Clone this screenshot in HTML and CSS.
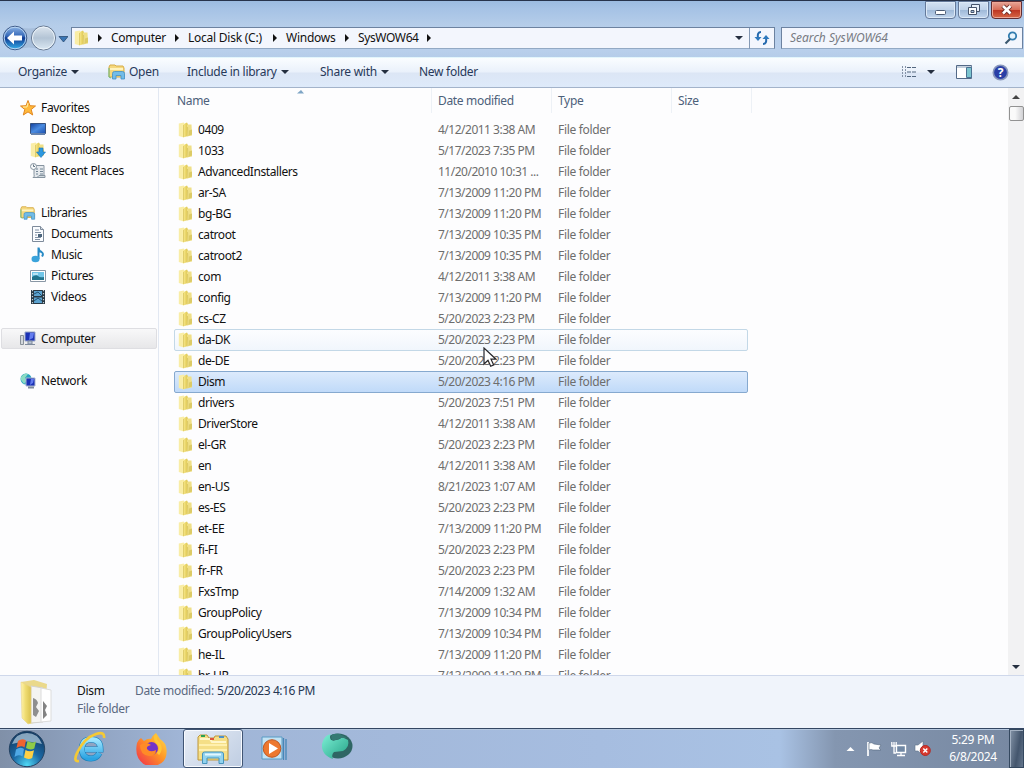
FILE: index.html
```html
<!DOCTYPE html>
<html lang="en">
<head>
<meta charset="utf-8">
<title>SysWOW64</title>
<link rel="stylesheet" href="styles.css">
</head>
<body>
<svg class="defs" width="0" height="0">
  <defs>
    <linearGradient id="gold" x1="0" x2="1"><stop offset="0" stop-color="#fff3ad"/><stop offset=".45" stop-color="#efdc72"/><stop offset="1" stop-color="#d9c24f"/></linearGradient>
    <linearGradient id="blue" x1="0" y1="0" x2="0" y2="1"><stop offset="0" stop-color="#8fb6e6"/><stop offset=".42" stop-color="#3568b8"/><stop offset=".5" stop-color="#103a92"/><stop offset="1" stop-color="#35b4ee"/></linearGradient>
    <linearGradient id="screen" x1="0" y1="0" x2="1" y2="1"><stop offset="0" stop-color="#123f9c"/><stop offset=".5" stop-color="#4a8be0"/><stop offset="1" stop-color="#1b4fb0"/></linearGradient>
    <linearGradient id="glass" x1="0" y1="0" x2="0" y2="1"><stop offset="0" stop-color="#dde6ef"/><stop offset=".5" stop-color="#b3c4d5"/><stop offset="1" stop-color="#dce9f4"/></linearGradient>
    <radialGradient id="orb" cx=".5" cy=".95" r=".9"><stop offset="0" stop-color="#4fd8f5"/><stop offset=".45" stop-color="#1c6aa6"/><stop offset="1" stop-color="#123a62"/></radialGradient>
    <linearGradient id="fox" x1="1" y1="0" x2="0" y2="1"><stop offset="0" stop-color="#ffe34a"/><stop offset=".45" stop-color="#ff9426"/><stop offset="1" stop-color="#f0284f"/></linearGradient>
    <linearGradient id="teal" x1="0" y1="0" x2="1" y2="1"><stop offset="0" stop-color="#7df0d6"/><stop offset="1" stop-color="#25a286"/></linearGradient>
    <linearGradient id="ie" x1="0" y1="0" x2="0" y2="1"><stop offset="0" stop-color="#9fe6ff"/><stop offset="1" stop-color="#2ba3e2"/></linearGradient>
    <symbol id="folder" viewBox="0 0 16 16"><path d="M.8 1.500L6 .5v15l-5.200-1.500z" fill="#f9eda6"/><path d="M4.500 2.500l4.500-2 1 2v11.500l-5 1.500z" fill="url(#gold)"/><path d="M9 2.500h4.500l.5 11-5 1z" fill="#efdf86"/><path d="M5.500 3v12M9.500 5l.5 9" stroke="#cfb850" stroke-width=".6"/><path d="M11 8.500l3-1v5l-3 1z" fill="#dccb66"/></symbol>
    <symbol id="library" viewBox="0 0 18 16"><path d="M1 3l1-2h5l1 1h7l1 2v9H1z" fill="#f5d87d" stroke="#d7ad48"/><path d="M2 5h13" stroke="#fff3bd" stroke-width="2"/><path d="M4.500 15V9.500q0-2 2-2h8q2 0 2 2V15h-3.500v-3.500h-5V15z" fill="#72bce8" stroke="#3f8fc7" stroke-width=".8"/><path d="M1 4v9l2 1" fill="none" stroke="#67bd85"/></symbol>
    <symbol id="monitor" viewBox="0 0 16 16"><path d="M.5 2.500h15v10H.5z" fill="url(#screen)" stroke="#35517f"/><path d="M1 12h14v2H1z" fill="#6682ac"/></symbol>
  </defs>
</svg>
<div class="window">
  <header class="titlebar">
    <div class="caption">
      <span class="cap"><svg width="14" height="12"><rect x="1.500" y="6.500" width="10" height="4" rx="1" fill="#fff" stroke="#4c5b74"/></svg></span>
      <span class="cap"><svg width="14" height="14"><path d="M4.500 1.500h8v7h-8z" fill="#e9f1fa" stroke="#46546b"/><path d="M1.500 4.500h8v7h-8z" fill="#fff" stroke="#46546b"/><path d="M4 7.500h3v2H4z" fill="#a9c0dc" stroke="#46546b"/></svg></span>
      <span class="cap cap-close"><svg width="14" height="12"><path d="M3 2l7.500 7.500M10.500 2L3 9.500" stroke="#6b2a24" stroke-width="4.500"/><path d="M3 2l7.500 7.500M10.500 2L3 9.500" stroke="#fff" stroke-width="2.600"/></svg></span>
    </div>
  </header>
  <nav class="addressbar">
    <svg class="travel" width="68" height="28"><path d="M16 2q12 5 27 0v24q-15-5-27 0z" fill="#9db4d0" opacity=".6"/><circle cx="15" cy="14" r="11.800" fill="url(#blue)" stroke="#405b87"/><circle cx="15" cy="14" r="10.800" fill="none" stroke="#b7d4f2"/><path d="M7 14l7-6.500v4h8v5h-8v4z" fill="#fff"/><circle cx="43.500" cy="14" r="12" fill="url(#glass)" stroke="#63758e"/><circle cx="43.500" cy="14" r="11" fill="none" stroke="#edf5fb"/><path d="M59 12.500h9l-4.500 5.500z" fill="#3a76b5" stroke="#294b72" stroke-width=".8"/></svg>
    <div class="path">
      <svg class="pathicon" width="16" height="16"><use href="#folder"/></svg>
      <i class="chev"></i><span class="crumb c1">Computer</span><i class="chev"></i><span class="crumb c2">Local Disk (C:)</span><i class="chev"></i><span class="crumb c3">Windows</span><i class="chev"></i><span class="crumb c4">SysWOW64</span><i class="chev"></i>
      <i class="down pathdown"></i>
      <span class="refresh"><svg width="16" height="14"><path d="M7 1Q3 1 4 7M9 13q4 0 3-6" fill="none" stroke="#2469ad" stroke-width="2"/><path d="M.5 6h7L4 10zM8.500 8h7L12 4z" fill="#2e79bd"/></svg></span>
    </div>
    <div class="search"><span>Search SysWOW64</span><svg width="14" height="14"><circle cx="8.500" cy="5" r="3.700" fill="#e7f4fd" stroke="#327caf" stroke-width="1.800"/><path d="M6 8l-4.500 4.500" stroke="#3b586f" stroke-width="2.200"/></svg></div>
  </nav>
  <div class="toolbar">
    <span class="tool t-org">Organize<i class="down"></i></span>
    <span class="tool t-open"><svg width="18" height="16"><use href="#library"/></svg>Open</span>
    <span class="tool t-inc">Include in library<i class="down"></i></span>
    <span class="tool t-share">Share with<i class="down"></i></span>
    <span class="tool t-new">New folder</span>
    <div class="views">
      <svg width="17" height="14"><path d="M1.500 1v12M4.500 1v12" stroke="#8492a6" stroke-dasharray="2 1"/><path d="M6 2.500h4M11 2.500h4M6 7h4M11 7h4M6 11.500h4M11 11.500h4" stroke="#53677f"/></svg>
      <i class="down"></i>
      <svg class="preview" width="17" height="14"><path d="M.5.500h15v13H.5z" fill="#fff" stroke="#536987"/><path d="M1 2h15" stroke="#8aa2bc"/><path d="M10.500 2.500h5v10h-5z" fill="#7cc5cf" stroke="#4b7292"/></svg>
      <svg class="help" width="17" height="17"><circle cx="8.500" cy="8.500" r="7.200" fill="#293fa6" stroke="#8796bb" stroke-width="1.600"/><text x="8.500" y="13" text-anchor="middle" fill="#fff">?</text></svg>
    </div>
  </div>
  <main class="content">
    <aside class="side">
      <div class="item top"><svg width="16" height="16" viewBox="0 0 16 16"><path d="M8 .5l2 5.200 5.500.3-4.300 3.500L12.700 15 8 11.900 3.300 15l1.500-5.500L.5 6 6 5.700z" fill="#ffb93b" stroke="#e18722"/><path d="M8 3L7 7l-4 0" fill="none" stroke="#fff0a5"/></svg>Favorites</div>
      <div class="item"><svg width="16" height="16"><use href="#monitor"/></svg>Desktop</div>
      <div class="item"><svg width="16" height="16"><use href="#folder"/><path d="M9 6h4v4h2.500L11 15.500 6.500 10H9z" fill="#2d98df" stroke="#1874b8" stroke-width=".6"/></svg>Downloads</div>
      <div class="item"><svg width="16" height="16"><path d="M4 2.500h10V12q0 2.500-2 2.500H3q2-1 1-3z" fill="#e5e9ed" stroke="#8794a0"/><path d="M6 6h2M10 6h3M6 8.500h2M10 8.500h3M6 11h2M10 11h3" stroke="#718494"/><circle cx="3.500" cy="3.500" r="3" fill="#f8fafb" stroke="#8794a0"/><path d="M3.500 1.500v2H5" fill="none" stroke="#637482"/><path d="M7 14.500h8v-2H9z" fill="#d2dbe1" stroke="#8794a0"/></svg>Recent Places</div>
      <div class="item top gap"><svg width="16" height="16"><use href="#library"/></svg>Libraries</div>
      <div class="item"><svg width="16" height="16"><path d="M2.500.500h8l3 3v12h-11z" fill="#fafcff" stroke="#7e8b9b"/><path d="M10.500.500v3h3" fill="#d3dbe4" stroke="#7e8b9b"/><path d="M5 4h4M5 6.500h6M5 9h2M5 11.500h6M5 13.500h5" stroke="#8292a5"/><path d="M8 8h4v3H8z" fill="#4c657d"/></svg>Documents</div>
      <div class="item"><svg width="16" height="16"><path d="M8.500 12V.500q0 3 3 4.500 2.500 1.500.5 4.500" fill="none" stroke="#278ac5" stroke-width="2"/><ellipse cx="5.500" cy="12" rx="4" ry="3.200" fill="#3aa3db"/></svg>Music</div>
      <div class="item"><svg width="16" height="16"><path d="M.5 2.500h15v11H.5z" fill="#fff" stroke="#8997a5"/><path d="M2 4h12v8H2z" fill="#72c6e8"/><path d="M2 9q4-3 6-1t6 1v3H2z" fill="#22758e"/><path d="M3 6h5" stroke="#fff"/></svg>Pictures</div>
      <div class="item"><svg width="16" height="16"><path d="M1 1h14v14H1z" fill="#283844"/><path d="M2.500 1v14M13.500 1v14" stroke="#c3ced4" stroke-width="1.200" stroke-dasharray="1.200 1.800"/><path d="M4 2h8v5H4zM4 8.500h8V14H4z" fill="#5ba2cf"/><path d="M4 5l4-2 4 4M4 12l4-3 4 3" fill="none" stroke="#24506e"/></svg>Videos</div>
      <div class="item top gap current"><svg width="16" height="16"><path d="M.5 4.500h3v9h-3z" fill="#d2d7dc" stroke="#899199"/><path d="M5 1h10v9H5z" fill="#1b31b5" stroke="#9aa8c8"/><path d="M10 2h4l-1 5-4 2z" fill="#637cef"/><path d="M8 10h4v3H8zM5 13.500h10" fill="#bbc5d5" stroke="#7e8b9d"/></svg>Computer</div>
      <div class="item top gap"><svg width="16" height="16"><circle cx="6" cy="6" r="5.500" fill="#28a2bf"/><path d="M1 4q4-5 7-3L5 5l2 2-3 4-3-4z" fill="#8bdcc3"/><path d="M6 5h9v8H6z" fill="#1b31b5" stroke="#a8b5ce"/><path d="M11 6h3l-1 4-3 2z" fill="#637cef"/><path d="M8 14.500h6" stroke="#7e8b9d" stroke-width="2"/></svg>Network</div>
    </aside>
    <section class="list">
      <div class="head"><span class="h-name">Name<svg class="sort" width="8" height="5"><path d="M0 4.500L4 1l3 3.500z" fill="#7ea5c5"/></svg></span><span>Date modified</span><span>Type</span><span class="h-size">Size</span></div>
      <div class="rows" id="rows"></div>
      <svg class="cursor" width="14" height="22"><path d="M1 1v16l4-3.800 2.700 6 3-1.300-2.700-5.700h5z" fill="#fff" stroke="#26262b" stroke-width="1.200"/></svg>
    </section>
    <div class="scroll"><i class="up"></i><b></b><i class="down"></i></div>
  </main>
  <footer class="details">
    <svg width="38" height="46"><path d="M1 3l13-2 13 4-3 37-15 3z" fill="#ead98c"/><path d="M11 7l12 2v34l-12 1z" fill="#f4f4f2" stroke="#d3d3cf"/><path d="M21 9l10 2v31l-10 1z" fill="#fff" stroke="#dcdcdc"/><path d="M13 19q4 1 5 5l-2 4 3 4-3 6-3-2z" fill="#8f8f8f"/><path d="M23 22l4 5-2 4 2 5-4 4z" fill="#838383"/><path d="M1 3l10 5v36l-3 1-6-6z" fill="url(#gold)" stroke="#e9d588" stroke-width=".6"/></svg>
    <div class="info"><div class="line1"><span class="name">Dism</span><span class="label">Date modified:</span><span class="value">5/20/2023 4:16 PM</span></div><div class="kind">File folder</div></div>
  </footer>
</div>
<div class="taskbar">
  <svg class="start" width="38" height="38"><circle cx="19" cy="19" r="17.700" fill="url(#orb)" stroke="#244363"/><path d="M4 14Q8 3 19 3t15 11q-15-5-30 0z" fill="#c5dceb" opacity=".65"/><path d="M10 11q4-3 8-.5l-1.500 7Q13 15 8.500 18z" fill="#ef6430"/><path d="M19.500 11q4 2.500 8.500.5l-1.700 7q-4 2-8.300-.5z" fill="#8fcb47"/><path d="M8 19.500q4-3 8-.5l-1.500 7.500q-4-2.500-8 .5z" fill="#4fa8e5"/><path d="M17.500 20q4 2.500 8.500.3L24.200 28q-4 2-8.200-.5z" fill="#ffd044"/></svg>
  <svg class="ie" width="32" height="34"><path d="M25.500 22Q22.500 27.500 17 27.500q-9 0-9-9.500t9-9.500q9.500 0 9.500 10H11" fill="none" stroke="#187fb9" stroke-width="6"/><path d="M25.500 22Q22.500 27.500 17 27.500q-9 0-9-9.500t9-9.500q9.500 0 9.500 10H11" fill="none" stroke="url(#ie)" stroke-width="4.800"/><path d="M5 30Q-1 31 3 22 10 7 22 3q9-3 8 4" fill="none" stroke="#f5c934" stroke-width="2.700"/></svg>
  <svg class="ff" width="32" height="32"><path d="M2 10q1-3 4-5l3 3q4-3 7-2 2-4 5-6l4 6q6 4 6.500 10 1 10-5 14-9 6-18 1Q-1 24 2 10z" fill="url(#fox)"/><circle cx="16.500" cy="15.500" r="6.500" fill="#7333c7"/><path d="M5 12q6-4 11 0-5 1-4 4 3 4 9 1 0 6-7 6-9-1-9-11z" fill="#ff8b27"/><path d="M21 2q-2 5 3 9 3 5-1 10" fill="none" stroke="#ffc536" stroke-width="3"/></svg>
  <div class="active"><svg width="34" height="32"><path d="M2 27V4l2-2h7l2 3h5l1-2h11l2 3v21z" fill="#f5df87" stroke="#bd963a"/><path d="M4 6h10l2 3h14" fill="none" stroke="#fff6c9" stroke-width="2"/><path d="M5 3h4" stroke="#2ba354" stroke-width="2"/><path d="M14 6h4" stroke="#de563b" stroke-width="2"/><path d="M23 4h5" stroke="#4d91c9" stroke-width="2"/><path d="M3 12h28M3 17h28" stroke="#fff0ae" stroke-width="2"/><path d="M6.500 30.500V21q0-2 2-2h17q2 0 2 2v9.500h-4.500V25h-12v5.500z" fill="#92d3ee" stroke="#4694bd"/><path d="M9 21.500h16" stroke="#e3f7ff" stroke-width="2"/></svg></div>
  <svg class="wmp" width="27" height="26"><path d="M1 1h20v22H1z" fill="#c2e3f4" stroke="#599bc4"/><path d="M22.500 2v22M25 3v21" stroke="#4687b8" stroke-width="1.300"/><circle cx="11" cy="12.500" r="8.800" fill="#ed782e" stroke="#bd5723"/><path d="M8 7l9 5.500L8 18z" fill="#fff"/></svg>
  <svg class="globe" width="34" height="30"><ellipse cx="18" cy="14" rx="14.500" ry="12.500" fill="#2f6664"/><path d="M2 12Q4 3 11 2q-2 3 0 6 8 1 11-3l6 3q2 7-5 11l-9 1q-3 3-1 7Q1 23 2 12z" fill="url(#teal)"/><path d="M12 2.500q3-1 8-.5l7 4-6 0-8 3q-3-3-1-6.500z" fill="#347a73"/></svg>
  <div class="tray">
    <svg class="t-up" width="9" height="6"><path d="M.5 5L4.500 1l4 4z" fill="#fff"/></svg>
    <svg class="flag" width="16" height="16"><path d="M2 1v14" stroke="#fff" stroke-width="1.700"/><path d="M3 2q3-1 5 1l7 1-2 3 2 2-8 0q-2-1-4 0z" fill="#fff" stroke="#53667e" stroke-width=".6"/></svg>
    <svg class="net" width="16" height="16"><path d="M5.500 4.500h9v7h-9z" fill="#7188a4" stroke="#fff" stroke-width="1.400"/><path d="M10 12v2M6 14.500h8M3 5v7h2M.800 1v4h4.400V1M3 1v4" fill="none" stroke="#fff" stroke-width="1.300"/></svg>
    <svg class="vol" width="17" height="17"><path d="M1 5h3l5-4v14l-5-4H1z" fill="#fff" stroke="#60738b" stroke-width=".6"/><circle cx="11.300" cy="10.500" r="5" fill="#d8392f" stroke="#b32924"/><path d="M9.300 8.500l4 4M13.300 8.500l-4 4" stroke="#fff" stroke-width="1.500"/></svg>
    <div class="clock"><span>5:29 PM</span><span>6/8/2024</span></div>
    <div class="show"></div>
  </div>
</div>
<script src="files.js"></script>
</body>
</html>
```
FILE: styles.css
```css
* { box-sizing: border-box; }
body { margin: 0; width: 1024px; height: 768px; overflow: hidden; display: flex; flex-direction: column; font: 12px/21px "Noto Sans", "Open Sans", sans-serif; letter-spacing: -.32px; color: #111; background: #fff; white-space: nowrap; }
svg { display: block; flex: none; }
.defs { position: absolute; }
.window { height: 728px; display: flex; flex-direction: column; }
.titlebar { height: 25px; border-top: 1px solid #26334b; background: linear-gradient(#9bbbe0, #a5c2e5 30%, #b5cde9); display: flex; justify-content: flex-end; padding-right: 2px; }
.caption { display: flex; gap: 2px; height: 18px; }
.cap { width: 31px; height: 18px; border: 1px solid #64799a; border-radius: 0 0 4px 4px; background: linear-gradient(#d3e2f3, #bed1e8 50%, #9fb9d8 51%, #c2d6ee); box-shadow: inset 0 0 0 1px #dce9f7; display: flex; align-items: center; justify-content: center; }
.cap-close { border-color: #622d31; background: linear-gradient(#e6a597, #d66a54 50%, #bd3522 51%, #d66745); box-shadow: inset 0 0 0 1px #eda796; }
.addressbar { height: 32px; display: flex; background: linear-gradient(#b5cde9, #bad0ec 70%, #b5cde9); padding: 2px 1px 0 0; }
.travel { margin-top: -3px; margin-right: 3px; }
.path { width: 704px; height: 22px; border: 1px solid #6c82a0; border-bottom-color: #92a9c4; background: #f3f6fd; display: flex; align-items: center; line-height: 18px; }
.pathicon { margin: 0 8px 0 2px; }
.chev { width: 0; height: 0; border: 4px solid transparent; border-left: 4px solid #111; border-right: 0; margin-right: 9px; }
.crumb { margin-right: 8px; letter-spacing: -.24px; padding-bottom: 1px; }
.c1 { width: 56px; } .c2 { width: 77px; } .c3 { width: 51px; } .c4 { width: 61px; letter-spacing: -.38px; }
.down { display: inline-block; width: 0; height: 0; border: 4px solid transparent; border-top: 4px solid #252f40; border-bottom: 0; }
.pathdown { margin-left: auto; margin-right: 6px; }
.refresh { width: 25px; height: 21px; border-left: 1px solid #8499b4; display: flex; align-items: center; justify-content: center; }
.search { margin-left: 6px; width: 242px; height: 22px; border: 1px solid #6c82a0; border-bottom-color: #92a9c4; background: #f3f6fd; display: flex; align-items: center; justify-content: space-between; padding: 0 4px 0 8px; font-style: italic; letter-spacing: 0; line-height: 18px; color: #777b83; }
.search span { padding-bottom: 1px; }
.toolbar { height: 31px; border-top: 1px solid #e2f5fb; border-bottom: 1px solid #a3b3ca; background: linear-gradient(#fafdff, #eaf1fb 48%, #dce6f5 52%, #deeafa); display: flex; line-height: 28px; color: #28395a; padding-left: 18px; letter-spacing: -.28px; }
.tool { display: flex; align-items: center; height: 28px; }
.tool .down { margin-left: 4px; }
.t-org { width: 90px; } .t-open { width: 79px; gap: 3px; } .t-inc { width: 133px; } .t-share { width: 99px; }
.views { margin-left: auto; display: flex; align-items: center; padding-right: 15px; height: 28px; }
.views > .down { margin: 0 21px 0 9px; }
.preview { margin-right: 19px; }
.help text { font: bold 12px "Open Sans", sans-serif; }
.content { height: 587px; display: flex; background: #fdfdfe; }
.side { width: 159px; border-right: 1px solid #e2e8f2; padding: 9px 1px 0; }
.item { height: 21px; display: flex; align-items: center; gap: 5px; padding-left: 29px; }
.item.top { padding-left: 19px; }
.item.gap { margin-top: 21px; }
.item.current { background: linear-gradient(#f8f8f9, #e7e7e9); border: 1px solid #dedee2; border-radius: 2px; padding-left: 18px; }
.list { position: relative; flex: 1; height: 587px; overflow: hidden; }
.head { height: 25px; display: flex; color: #4c607a; line-height: 25px; }
.head span { width: 120px; border-right: 1px solid #edf1f6; padding-left: 6px; }
.head .h-name { width: 273px; padding-left: 18px; position: relative; }
.head .h-size { width: 80px; }
.sort { position: absolute; left: 138px; top: 1px; }
.rows { margin-top: 6px; padding-left: 15px; }
.row { width: 574px; height: 21px; display: flex; align-items: center; border: 1px solid transparent; border-radius: 2px; line-height: 19px; color: #6d6d6d; padding-left: 3px; }
.row svg { margin-right: 4px; }
.row .fname { width: 240px; color: #111; letter-spacing: -.42px; }
.row .date { width: 120px; letter-spacing: -.5px; }
.row.hover, .row.selected { height: 22px; margin-bottom: -1px; padding-bottom: 1px; }
.row.hover { border-color: #c3d8e7; background: linear-gradient(#fcfdff, #f1f6fc); }
.row.selected { border-color: #86a9cf; background: linear-gradient(#dceafc, #c0daf9); }
.cursor { position: absolute; left: 324px; top: 259px; }
.scroll { width: 16px; background: #f2f2f3; display: flex; flex-direction: column; align-items: center; padding: 7px 0 6px; }
.scroll .up { border: 4px solid transparent; border-top: 0; border-bottom: 4px solid #444; }
.scroll b { width: 15px; height: 15px; border: 1px solid #929292; border-radius: 2px; background: linear-gradient(90deg, #fafafa 40%, #d1d1d4); margin-top: 7px; }
.scroll .down { margin-top: auto; }
.details { height: 53px; border-top: 1px solid #cfd8eb; background: #f0f4fb; display: flex; padding: 3px 0 0 20px; }
.info { margin-left: 19px; padding-top: 3px; line-height: 18px; }
.line1 { display: flex; }
.name { width: 58px; } .label, .kind { color: #5a6880; } .label { width: 82px; } .value { color: #253652; letter-spacing: -.42px; }
.taskbar { height: 40px; border-top: 1px solid #344662; box-shadow: inset 0 1px #b6c8df; background: linear-gradient(90deg, #8090a8 0, #8c9fbc 70px, #a0b5d6 180px, #a6bde0 600px, #a9c2e4 780px, #8496b0 835px, #7788a1); display: flex; align-items: center; }
.start { margin-left: 8px; }
.ie { margin-left: 28px; margin-top: -2px; }
.ff { margin-left: 29px; }
.active { margin-left: 16px; width: 60px; height: 39px; border: 1px solid #405574; border-radius: 3px; background: linear-gradient(135deg, #e7edf6, #bfcde2); box-shadow: inset 0 0 0 1px #f7faff; display: flex; align-items: center; justify-content: center; }
.wmp { margin-left: 18px; }
.globe { margin-left: 32px; margin-top: -4px; }
.tray { margin-left: auto; height: 39px; display: flex; align-items: center; }
.flag { margin-left: 11px; } .net { margin-left: 9px; } .vol { margin-left: 7px; }
.clock { margin-left: 12px; width: 60px; height: 36px; display: flex; flex-direction: column; align-items: center; line-height: 17px; color: #fff; }
.show { margin-left: 6px; width: 15px; height: 39px; border: 1px solid #34485f; background: linear-gradient(100deg, #8494a8, #44566d 60%, #64768d); box-shadow: inset 1px 1px #a3b1c2; }
```
FILE: files.js
```js
const files = [
  ["0409", "4/12/2011 3:38 AM"], ["1033", "5/17/2023 7:35 PM"],
  ["AdvancedInstallers", "11/20/2010 10:31 ..."], ["ar-SA", "7/13/2009 11:20 PM"],
  ["bg-BG", "7/13/2009 11:20 PM"], ["catroot", "7/13/2009 10:35 PM"],
  ["catroot2", "7/13/2009 10:35 PM"], ["com", "4/12/2011 3:38 AM"],
  ["config", "7/13/2009 11:20 PM"], ["cs-CZ", "5/20/2023 2:23 PM"],
  ["da-DK", "5/20/2023 2:23 PM", "hover"], ["de-DE", "5/20/2023 2:23 PM"],
  ["Dism", "5/20/2023 4:16 PM", "selected"], ["drivers", "5/20/2023 7:51 PM"],
  ["DriverStore", "4/12/2011 3:38 AM"], ["el-GR", "5/20/2023 2:23 PM"],
  ["en", "4/12/2011 3:38 AM"], ["en-US", "8/21/2023 1:07 AM"],
  ["es-ES", "5/20/2023 2:23 PM"], ["et-EE", "7/13/2009 11:20 PM"],
  ["fi-FI", "5/20/2023 2:23 PM"], ["fr-FR", "5/20/2023 2:23 PM"],
  ["FxsTmp", "7/14/2009 1:32 AM"], ["GroupPolicy", "7/13/2009 10:34 PM"],
  ["GroupPolicyUsers", "7/13/2009 10:34 PM"], ["he-IL", "7/13/2009 11:20 PM"],
  ["hr-HR", "7/13/2009 11:20 PM"]
];
document.getElementById("rows").innerHTML = files.map(([name, date, state = ""]) =>
  `<div class="row ${state}"><svg width="16" height="16"><use href="#folder"/></svg><span class="fname">${name}</span><span class="date">${date}</span><span>File folder</span></div>`
).join("");
```
